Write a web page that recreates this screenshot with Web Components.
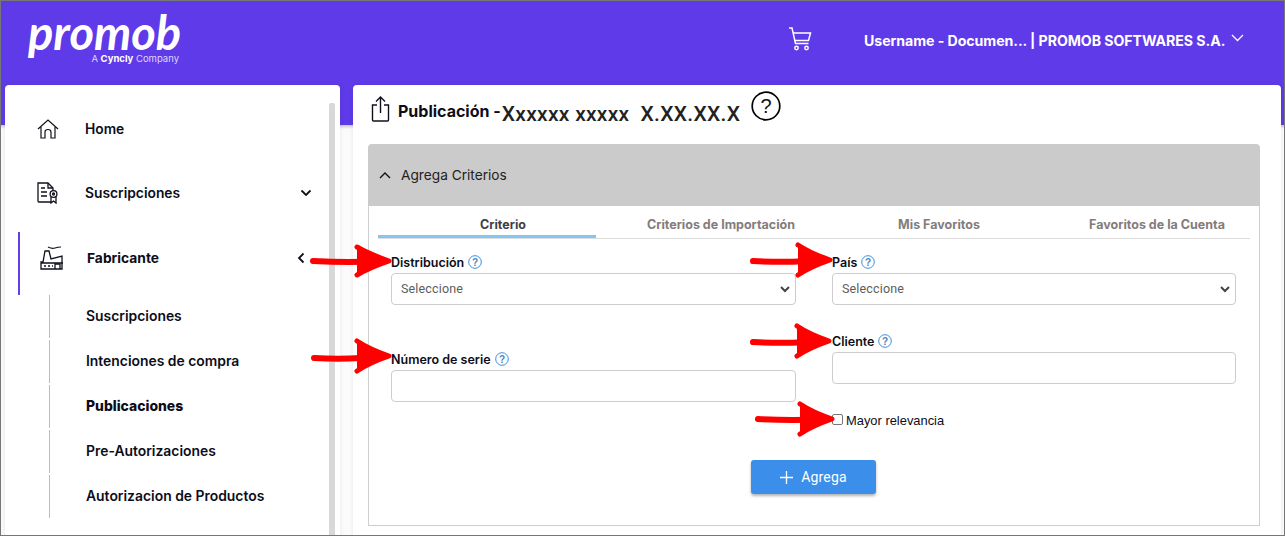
<!DOCTYPE html>
<html lang="es">
<head>
<meta charset="utf-8">
<title>Promob</title>
<style>
  html, body { margin: 0; height: 100%; overflow: hidden; background: #fff; }
  body { font-family: "Inter", "Liberation Sans", sans-serif; color: #0d0d1a; }
</style>
</head>
<body>
<promob-app>
  <promob-header slot="header" user="Username - Documen... | PROMOB SOFTWARES S.A."></promob-header>
  <side-nav slot="side">
    <nav-item icon="home">Home</nav-item>
    <nav-item icon="cert" chevron="down">Suscripciones</nav-item>
    <nav-item icon="factory" chevron="left" active>Fabricante</nav-item>
    <nav-sub>Suscripciones</nav-sub>
    <nav-sub>Intenciones de compra</nav-sub>
    <nav-sub bold>Publicaciones</nav-sub>
    <nav-sub>Pre-Autorizaciones</nav-sub>
    <nav-sub>Autorizacion de Productos</nav-sub>
  </side-nav>
  <publish-panel slot="main">
    <criteria-box title="Agrega Criterios">
      <tab-bar></tab-bar>
      <criteria-form></criteria-form>
    </criteria-box>
  </publish-panel>
  <red-arrows slot="overlay"></red-arrows>
</promob-app>

<script>
// Icons shared by the elements below
const ICONS = {
  home: '<svg width="22" height="20" viewBox="0 0 22 20" fill="none" stroke="#10101c" stroke-width="1.2"><path d="M1 10 11 1l10 9"/><path d="M4 8v11h4v-6q0-2.500 3-2.500t3 2.500v6h4V8"/></svg>',
  cert: '<svg width="22" height="22" viewBox="0 0 22 22" fill="none" stroke="#10101c" stroke-width="1.3"><path d="M14 20H2q-1 0-1-1V1h10l5 5v3"/><path d="M11 1v5h5M4 6h4M4 10h6M4 14h6"/><circle cx="16.500" cy="12" r="3.400"/><circle cx="16.500" cy="12" r="1"/><path d="M14 15v6l2.500-2 2.500 2v-6"/></svg>',
  factory: '<svg width="24" height="24" viewBox="0 0 24 24" fill="none" stroke="#10101c" stroke-width="1.300"><path d="M1 23V16h2l2-11h4l2 8 11-3v13z"/><path d="M1 17h22M4 20h2M8 20h2M12 20h1"/><path d="M15 23v-5h5v5"/><path d="M8 1q4 2 7 1t6-1" stroke-width="1.100"/></svg>',
  down: '<svg width="12" height="8" viewBox="0 0 12 8" fill="none" stroke="#10101c" stroke-width="1.800"><path d="M1.500 1.500 6 6l4.500-4.500"/></svg>',
  left: '<svg width="8" height="12" viewBox="0 0 8 12" fill="none" stroke="#10101c" stroke-width="1.800"><path d="M6.500 1.500 2 6l4.500 4.500"/></svg>'
};

class PromobApp extends HTMLElement {
  constructor() {
    super();
    this.attachShadow({ mode: 'open' });
    this.shadowRoot.innerHTML = `
      <style>
        :host {
          display: block;
          position: relative;
          box-sizing: border-box;
          width: 1285px;
          height: 536px;
          overflow: hidden;
          border: 1px solid #777;
          background: linear-gradient(#5f3ae8 124px, #c9c9c9 124px, #fbfbfb 128px);
        }
        .cols {
          display: flex;
          gap: 13px;
          padding: 0 3px 0 4px;
        }
      </style>
      <slot name="header"></slot>
      <div class="cols">
        <slot name="side"></slot>
        <slot name="main"></slot>
      </div>
      <slot name="overlay"></slot>
    `;
  }
}

class PromobHeader extends HTMLElement {
  constructor() {
    super();
    this.attachShadow({ mode: 'open' });
    this.shadowRoot.innerHTML = `
      <style>
        :host {
          display: flex;
          align-items: flex-start;
          height: 84px;
          color: #fff;
          padding-left: 27px;
          box-sizing: border-box;
        }
        .logo { width: 153px; margin-top: 10px; display: flex; flex-direction: column; align-items: flex-end; }
        .word {
          align-self: flex-start;
          font: italic 700 47px/42px "Lato", sans-serif;
          white-space: nowrap;
        }
        .tag { font: 400 9.500px/11px "Inter", sans-serif; color: #ded7fb; margin: 0 2px 0 0; white-space: nowrap; }
        .tag b { font-weight: 700; color: #fff; }
        .cart { margin: 26px 0 0 607px; display: block; }
        .user {
          margin: 31px 0 0 52px;
          font: 700 14.150px/17px "Inter", sans-serif;
          letter-spacing: -.06px;
          white-space: nowrap;
        }
        .chev { margin: 33px 0 0 6px; display: block; }
      </style>
      <div class="logo">
        <span class="word">promob</span>
        <span class="tag">A <b>Cyncly</b> Company</span>
      </div>
      <svg class="cart" width="24" height="24" viewBox="0 0 24 24" fill="none" stroke="#fff" stroke-width="1.500">
        <path d="M1 1h3l3.500 15.500h13"/><path d="M5 6h17.500l-2 7.500H7"/>
        <circle cx="8.500" cy="21" r="1.700"/><circle cx="18.500" cy="21" r="1.700"/>
      </svg>
      <span class="user">${this.getAttribute('user')}</span>
      <svg class="chev" width="13" height="8" viewBox="0 0 13 8" fill="none" stroke="#fff" stroke-width="1.300"><path d="M1 1l5.500 5.500L12 1"/></svg>
    `;
  }
}

class SideNav extends HTMLElement {
  constructor() {
    super();
    this.attachShadow({ mode: 'open' });
    this.shadowRoot.innerHTML = `
      <style>
        :host {
          display: block;
          position: relative;
          flex: 0 0 335px;
          height: 460px;
          background: #fff;
          border-radius: 4px 4px 0 0;
          box-sizing: border-box;
          padding: 12px 0 0 13px;
          box-shadow: 0 0 5px rgba(0, 0, 0, .08);
        }
        /* scrollbar thumb */
        .thumb { position: absolute; top: 18px; right: 5px; bottom: 0; width: 6px; background: #d8d8d8; border-radius: 2px 2px 0 0; }
      </style>
      <slot></slot>
      <div class="thumb"></div>
    `;
  }
}

class NavItem extends HTMLElement {
  constructor() {
    super();
    this.attachShadow({ mode: 'open' });
    const chev = this.getAttribute('chevron');
    this.shadowRoot.innerHTML = `
      <style>
        :host {
          display: flex;
          align-items: center;
          box-sizing: border-box;
          height: 64px;
          width: 294px;
          padding-left: 19px;
          font: 600 13.800px/18px "Inter", sans-serif;
          color: #0d0d1a;
        }
        :host([active]) {
          height: 63px;
          margin-top: 7px;
          padding: 0 0 11px 20px;
          border-left: 2px solid #6240e6;
          font-weight: 700;
        }
        .icon { flex: 0 0 48px; display: flex; }
        :host([active]) .icon { flex-basis: 47px; }
        .label { flex: 1; }
        .chev { display: flex; }
        :host([chevron="left"]) .chev { margin-right: 7px; }
      </style>
      <span class="icon">${ICONS[this.getAttribute('icon')]}</span>
      <span class="label"><slot></slot></span>
      <span class="chev">${chev ? ICONS[chev] : ''}</span>
    `;
  }
}

class NavSub extends HTMLElement {
  constructor() {
    super();
    this.attachShadow({ mode: 'open' });
    this.shadowRoot.innerHTML = `
      <style>
        :host {
          display: block;
          height: 45px;
          margin-left: 31px;
          padding-left: 37px;
          font: 600 13.900px/43px "Inter", sans-serif;
          background: linear-gradient(#bdbdbd, #bdbdbd) 0 0 / 1px 43px no-repeat;
          color: #0d0d1a;
        }
        :host([bold]) { font-weight: 800; }
      </style>
      <slot></slot>
    `;
  }
}

class PublishPanel extends HTMLElement {
  constructor() {
    super();
    this.attachShadow({ mode: 'open' });
    this.shadowRoot.innerHTML = `
      <style>
        :host {
          display: block;
          flex: 0 0 928px;
          height: 460px;
          background: #fff;
          border-radius: 4px 4px 0 0;
          box-sizing: border-box;
          padding: 6px 21px 0 15px;
          box-shadow: 0 0 5px rgba(0, 0, 0, .08);
        }
        .title { display: flex; height: 53px; align-items: flex-start; }
        .share { margin: 5px 8px 0 3px; display: block; }
        h1 { margin: 10px 0 0; font: 700 16px/20px "Inter", sans-serif; color: #0d0d1a; white-space: pre; }
        .code { margin: 11px 11px 0 1px; font: 500 21px/24px "Roboto", sans-serif; color: #222; white-space: pre; letter-spacing: .3px; }
        .help { display: block; margin-top: 0; }
      </style>
      <div class="title">
        <svg class="share" width="19" height="26" viewBox="0 0 19 26" fill="none" stroke="#10101c" stroke-width="1.400">
          <path d="M9.500 17V1M5 5.500 9.500 1 14 5.500"/>
          <path d="M6 9H1.500v15q0 1 1 1h14q1 0 1-1V9H13"/>
        </svg>
        <h1>Publicación -</h1>
        <span class="code">Xxxxxx xxxxx  X.XX.XX.X</span>
        <svg class="help" width="30" height="30" viewBox="0 0 30 30">
          <circle cx="15" cy="15" r="13.800" fill="none" stroke="#000" stroke-width="1.700"/>
          <text x="15" y="22" text-anchor="middle" font-family="Liberation Sans" font-size="20" fill="#111">?</text>
        </svg>
      </div>
      <slot></slot>
    `;
  }
}

class CriteriaBox extends HTMLElement {
  constructor() {
    super();
    this.attachShadow({ mode: 'open' });
    this.shadowRoot.innerHTML = `
      <style>
        :host { display: block; }
        .head {
          display: flex;
          align-items: center;
          gap: 10px;
          height: 62px;
          padding-left: 11px;
          background: #cbcbcb;
          border-radius: 4px 4px 0 0;
          font: 400 13.700px/18px "Inter", sans-serif;
          color: #222;
        }
        .body {
          box-sizing: border-box;
          height: 320px;
          border: 1px solid #cfcfcf;
          border-top: 0;
          padding: 0 9px;
        }
      </style>
      <div class="head">
        <svg width="12" height="8" viewBox="0 0 12 8" fill="none" stroke="#111" stroke-width="1.400"><path d="M1 7l5-5 5 5"/></svg>
        <span>${this.getAttribute('title')}</span>
      </div>
      <div class="body"><slot></slot></div>
    `;
  }
}

class TabBar extends HTMLElement {
  constructor() {
    super();
    this.attachShadow({ mode: 'open' });
    const tabs = ['Criterio', 'Criterios de Importación', 'Mis Favoritos', 'Favoritos de la Cuenta'];
    this.shadowRoot.innerHTML = `
      <style>
        :host {
          display: grid;
          grid-template-columns: repeat(4, 218px);
          height: 32px;
          border-bottom: 1px solid #ddd;
          box-sizing: content-box;
        }
        .tab {
          box-sizing: border-box;
          height: 32px;
          padding: 10px 0 0 32px;
          text-align: center;
          font: 700 12.500px/18px "Inter", sans-serif;
          color: #837c7c;
          white-space: nowrap;
        }
        .tab.on { color: #3f3f46; border-bottom: 3px solid #82c6f2; }
      </style>
      ${tabs.map((t, i) => `<div class="tab${i === 0 ? ' on' : ''}">${t}</div>`).join('')}
    `;
  }
}

class FormField extends HTMLElement {
  constructor() {
    super();
    this.attachShadow({ mode: 'open' });
    this.shadowRoot.innerHTML = `
      <style>
        :host { display: block; }
        .label {
          display: flex;
          align-items: center;
          gap: 4px;
          height: 18px;
          margin-bottom: 1px;
          font: 600 12.500px/16px "Inter", sans-serif;
          color: #0d0d1a;
        }
        svg { display: block; margin-top: -3px; }
      </style>
      <div class="label">
        <span>${this.getAttribute('label')}</span>
        <svg width="14" height="14" viewBox="0 0 14 14">
          <circle cx="7" cy="7" r="6.300" fill="none" stroke="#3d8fdc" stroke-width="1"/>
          <text x="7" y="10.500" text-anchor="middle" font-family="Liberation Sans" font-size="10" fill="#4a86c0">?</text>
        </svg>
      </div>
      <slot></slot>
    `;
  }
}

class TextBox extends HTMLElement {
  constructor() {
    super();
    this.attachShadow({ mode: 'open' });
    this.shadowRoot.innerHTML = `
      <style>
        :host {
          display: flex;
          align-items: center;
          justify-content: space-between;
          box-sizing: border-box;
          height: 32px;
          padding: 0 5px 0 9px;
          border: 1px solid #cdcdcd;
          border-radius: 4px;
          background: #fff;
          font: 400 12.500px/16px "Roboto", "Liberation Sans", sans-serif;
          color: #5d5d5d;
          letter-spacing: .15px;
        }
      </style>
      <slot></slot>
      ${this.hasAttribute('select') ? '<svg width="10" height="7" viewBox="0 0 10 7" fill="none" stroke="#444" stroke-width="2"><path d="M1 1l4 4 4-4"/></svg>' : ''}
    `;
  }
}

class CriteriaForm extends HTMLElement {
  constructor() {
    super();
    this.attachShadow({ mode: 'open' });
    this.shadowRoot.innerHTML = `
      <style>
        :host {
          display: block;
          padding: 15px 14px 0 13px;
        }
        .grid {
          display: grid;
          grid-template-columns: 405px 404px;
          column-gap: 36px;
        }
        .col { display: flex; flex-direction: column; }
        .col.l { gap: 46px; }
        .col.r { gap: 28px; }
        .check {
          display: flex;
          align-items: center;
          gap: 3px;
          margin-top: 1px;
          font: 400 12.900px/16px "Liberation Sans", sans-serif;
          color: #0d0d1a;
        }
        .box { box-sizing: border-box; width: 11px; height: 11px; border: 1px solid #777; border-radius: 2px; margin-top: -3px; background: #fff; }
        .foot { display: flex; justify-content: center; margin-top: 31px; padding-right: 1px; }
        .btn {
          display: flex;
          align-items: center;
          justify-content: center;
          gap: 7px;
          width: 125px;
          height: 34px;
          background: #3b8eea;
          border-radius: 3px;
          color: #fff;
          font: 400 14px/18px "Roboto", sans-serif;
          letter-spacing: .2px;
          box-shadow: 0 2px 3px rgba(0, 0, 0, .3);
        }
      </style>
      <div class="grid">
        <div class="col l">
          <form-field label="Distribución"><text-box select>Seleccione</text-box></form-field>
          <form-field label="Número de serie"><text-box></text-box></form-field>
        </div>
        <div class="col r">
          <form-field label="País"><text-box select>Seleccione</text-box></form-field>
          <form-field label="Cliente"><text-box></text-box></form-field>
          <div class="check"><span class="box"></span><span>Mayor relevancia</span></div>
        </div>
      </div>
      <div class="foot">
        <div class="btn">
          <svg width="15" height="15" viewBox="0 0 15 15" stroke="#fff" stroke-width="1.300"><path d="M7.500 1v13M1 7.500h13"/></svg>
          <span>Agrega</span>
        </div>
      </div>
    `;
  }
}

// Hand-drawn red arrows that lie over the form
class RedArrows extends HTMLElement {
  constructor() {
    super();
    this.attachShadow({ mode: 'open' });
    const arrow = (x1, y1, x2, y2, h) => `
      <path d="M${x1} ${y1} Q${(x1 + x2) / 2} ${y1 + 2} ${x2 - 8} ${y2}" stroke-width="6"/>
      <path d="M${x2 - 32} ${y2 - h} Q${x2 - 20} ${y2 - 7} ${x2} ${y2} Q${x2 - 20} ${y2 + 7} ${x2 - 32} ${y2 + h}" stroke-width="5" fill="#f00"/>`;
    this.shadowRoot.innerHTML = `
      <style>
        :host { position: absolute; inset: 0; display: block; pointer-events: none; }
        svg { position: absolute; left: -1px; top: -1px; }
      </style>
      <svg width="1285" height="536" fill="none" stroke="#f00" stroke-linecap="round" stroke-linejoin="round">
        ${arrow(313, 261, 389, 261, 14)}
        ${arrow(753, 261, 830, 260, 15)}
        ${arrow(314, 358, 389, 356, 15)}
        ${arrow(753, 342, 829, 341, 15)}
        ${arrow(758, 419, 832, 419, 15)}
      </svg>
    `;
  }
}

customElements.define('promob-app', PromobApp);
customElements.define('promob-header', PromobHeader);
customElements.define('side-nav', SideNav);
customElements.define('nav-item', NavItem);
customElements.define('nav-sub', NavSub);
customElements.define('publish-panel', PublishPanel);
customElements.define('criteria-box', CriteriaBox);
customElements.define('tab-bar', TabBar);
customElements.define('form-field', FormField);
customElements.define('text-box', TextBox);
customElements.define('criteria-form', CriteriaForm);
customElements.define('red-arrows', RedArrows);
</script>
</body>
</html>
